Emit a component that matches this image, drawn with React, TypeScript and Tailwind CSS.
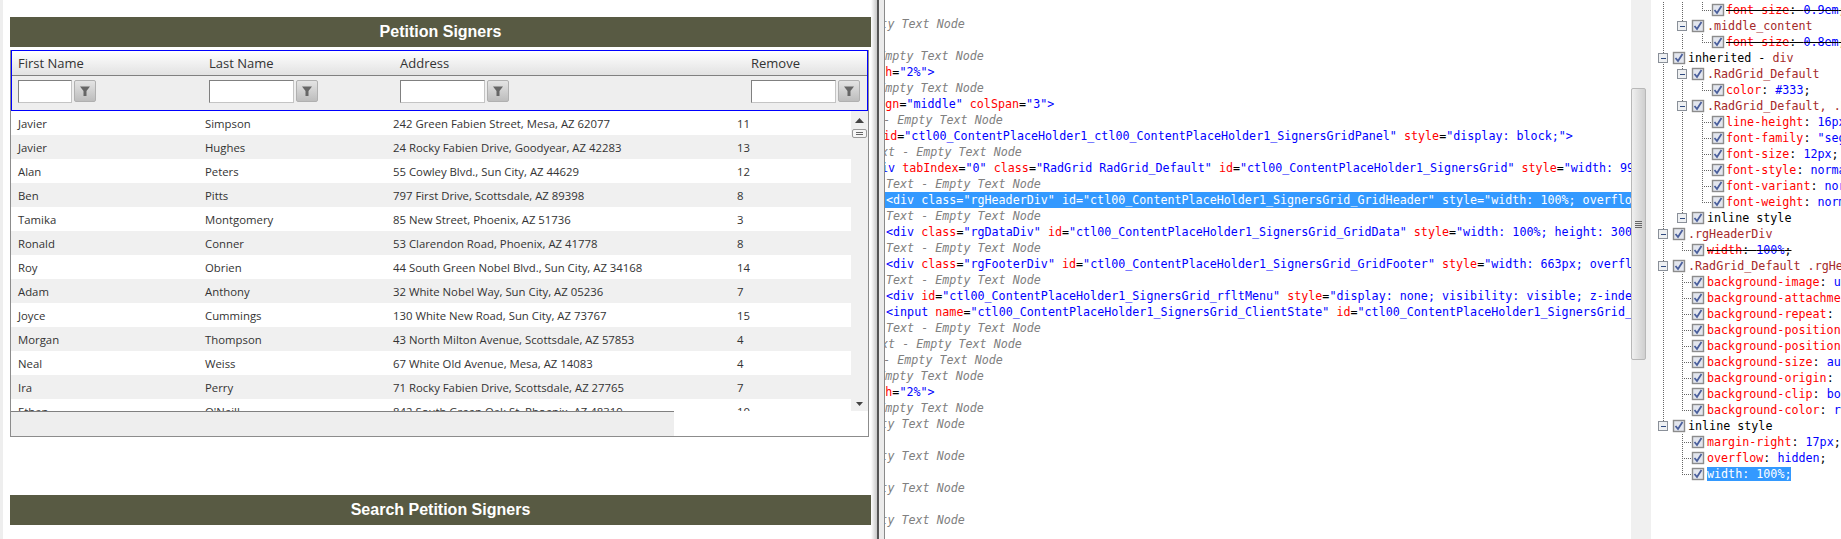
const signers = [
  ['Javier', 'Simpson', '242 Green Fabien Street, Mesa, AZ 62077', '11'],
  ['Javier', 'Hughes', '24 Rocky Fabien Drive, Goodyear, AZ 42283', '13'],
  ['Alan', 'Peters', '55 Cowley Blvd., Sun City, AZ 44629', '12'],
  ['Ben', 'Pitts', '797 First Drive, Scottsdale, AZ 89398', '8'],
  ['Tamika', 'Montgomery', '85 New Street, Phoenix, AZ 51736', '3'],
  ['Ronald', 'Conner', '53 Clarendon Road, Phoenix, AZ 41778', '8'],
  ['Roy', 'Obrien', '44 South Green Nobel Blvd., Sun City, AZ 34168', '14'],
  ['Adam', 'Anthony', '32 White Nobel Way, Sun City, AZ 05236', '7'],
  ['Joyce', 'Cummings', '130 White New Road, Sun City, AZ 73767', '15'],
  ['Morgan', 'Thompson', '43 North Milton Avenue, Scottsdale, AZ 57853', '4'],
  ['Neal', 'Weiss', '67 White Old Avenue, Mesa, AZ 14083', '4'],
  ['Ira', 'Perry', '71 Rocky Fabien Drive, Scottsdale, AZ 27765', '7'],
  ['Ethan', "O'Neill", '842 South Green Oak St, Phoenix, AZ 48319', '10'],
]

const INDENT = ['ml-[1px]', 'ml-[-18px]', 'ml-[-37px]', 'ml-[-56px]', 'ml-[-75px]']

const TEXT = 'Text - Empty Text Node'

// [indent level, text]; null is a blank line
const codeLines: ([number, string] | null)[] = [
  null,
  [4, TEXT],
  null,
  [3, TEXT],
  [3, '<td width="2%">'],
  [3, TEXT],
  [3, '<td vAlign="middle" colSpan="3">'],
  [2, TEXT],
  [2, '<div id="ctl00_ContentPlaceHolder1_ctl00_ContentPlaceHolder1_SignersGridPanel" style="display: block;">'],
  [1, TEXT],
  [1, '<div tabIndex="0" class="RadGrid RadGrid_Default" id="ctl00_ContentPlaceHolder1_SignersGrid" style="width: 99%; height: 300px;">'],
  [0, TEXT],
  [0, '<div class="rgHeaderDiv" id="ctl00_ContentPlaceHolder1_SignersGrid_GridHeader" style="width: 100%; overflow: hidden; margin-right: 17px;">'],
  [0, TEXT],
  [0, '<div class="rgDataDiv" id="ctl00_ContentPlaceHolder1_SignersGrid_GridData" style="width: 100%; height: 300px; overflow: auto;">'],
  [0, TEXT],
  [0, '<div class="rgFooterDiv" id="ctl00_ContentPlaceHolder1_SignersGrid_GridFooter" style="width: 663px; overflow: hidden;">'],
  [0, TEXT],
  [0, '<div id="ctl00_ContentPlaceHolder1_SignersGrid_rfltMenu" style="display: none; visibility: visible; z-index: 7000;">'],
  [0, '<input name="ctl00_ContentPlaceHolder1_SignersGrid_ClientState" id="ctl00_ContentPlaceHolder1_SignersGrid_ClientState" type="hidden">'],
  [0, TEXT],
  [1, TEXT],
  [2, TEXT],
  [3, TEXT],
  [3, '<td width="2%">'],
  [3, TEXT],
  [4, TEXT],
  null,
  [4, TEXT],
  null,
  [4, TEXT],
  null,
  [4, TEXT],
]

function Markup({ text }: { text: string }) {
  const tokens = text.split(/(\s+|=|"[^"]*"?)/).filter(Boolean)
  return (
    <>
      {tokens.map((t, i) => {
        let color = 'text-[#ff0000]'
        if (t === '=' || t.trim() === '') color = 'text-black'
        else if (t[0] === '"' || t[0] === '<' || t[0] === '>') color = 'text-[#0000ff]'
        return <span key={i} className={color}>{t}</span>
      })}
    </>
  )
}

function CodeLine({ line, selected }: { line: [number, string] | null; selected: boolean }) {
  if (!line) return <div className="h-4" />
  const [level, text] = line
  return (
    <div className={`h-4 leading-4 whitespace-pre ${selected ? 'bg-[#3399ff] text-white' : ''}`}>
      <div className={INDENT[level]}>
        {selected ? text : text[0] === '<' ? <Markup text={text} /> : <span className="italic text-[#808080]">{text}</span>}
      </div>
    </div>
  )
}

type Line = 'none' | 'half' | 'full'

function TreeGlyph({ level, spine, mid, leaf, minus }: { level: 0 | 1 | 2; spine: Line; mid: Line; leaf: Line; minus: boolean }) {
  const box = [1673, 1692, 1712][level]
  const width = [37, 56, 75][level]
  const minusAt = [1663, 1682, 1702][level]
  const vline = (x: number, l: Line) =>
    l !== 'none' && <line x1={x + 0.5} x2={x + 0.5} y1={0} y2={l === 'half' ? 8 : 16} stroke="#666" strokeDasharray="1 1" />
  return (
    <svg width={width} height={16} viewBox={`1651 0 ${width} 16`} className="shrink-0">
      {vline(1663, spine)}
      {vline(1682, mid)}
      {vline(1702, leaf)}
      {!minus && <line x1={minusAt} x2={box} y1={8.5} y2={8.5} stroke="#666" strokeDasharray="1 1" />}
      {minus && (
        <g>
          <rect x={minusAt - 4.5} y={3.5} width={9} height={9} fill="#eef0f2" stroke="#8a9099" />
          <line x1={minusAt - 2} x2={minusAt + 3} y1={8.5} y2={8.5} stroke="#2f4a80" />
        </g>
      )}
      <rect x={box + 0.5} y={2.5} width={11} height={11} fill="#e3e6ee" stroke="#8c8c8c" strokeWidth={1.4} />
      <path d={`M${box + 2.5} 8 L${box + 5} 11 L${box + 9.5} 4`} fill="none" stroke="#4a5f9c" strokeWidth={1.8} />
    </svg>
  )
}

function Prop({ name, value, strike, selected }: { name: string; value: string; strike?: boolean; selected?: boolean }) {
  if (selected) return <span className="bg-[#3399ff] text-white">{name}: {value};</span>
  return (
    <span className={strike ? 'line-through decoration-black' : ''}>
      <span className="text-[#ff0000]">{name}</span>
      <span className="text-black">: </span>
      <span className="text-[#0000ff]">{value}</span>
      <span className="text-black">;</span>
    </span>
  )
}

const Selector = ({ text }: { text: string }) => <span className="text-[#a52a2a]">{text}</span>
const Plain = ({ text }: { text: string }) => <span className="text-black">{text}</span>

type TreeRow = { level: 0 | 1 | 2; spine?: Line; mid?: Line; leaf?: Line; minus?: boolean; label: React.ReactNode }

const rule = (text: string, mid: Line = 'full'): TreeRow => ({ level: 1, spine: 'full', mid, minus: true, label: <Selector text={text} /> })
const cprop = (name: string, value: string, leaf: Line = 'full', strike = false): TreeRow => ({
  level: 2, spine: 'full', mid: 'full', leaf, label: <Prop name={name} value={value} strike={strike} />,
})
const bprop = (name: string, value: string, mid: Line = 'full', spine: Line = 'full', strike = false, selected = false): TreeRow => ({
  level: 1, spine, mid, label: <Prop name={name} value={value} strike={strike} selected={selected} />,
})
const top = (label: React.ReactNode, spine: Line = 'full'): TreeRow => ({ level: 0, spine, minus: true, label })

const treeRows: TreeRow[] = [
  cprop('font-size', '0.9em', 'half', true),
  { ...rule('.middle_content'), mid: 'half' },
  cprop('font-size', '0.8em', 'half', true),
  top(<><Plain text="inherited - " /><Selector text="div" /></>),
  rule('.RadGrid_Default'),
  cprop('color', '#333', 'half'),
  rule('.RadGrid_Default, .RadGrid_Default .rgMasterTable'),
  cprop('line-height', '16px'),
  cprop('font-family', '"segoe ui", arial, sans-serif'),
  cprop('font-size', '12px'),
  cprop('font-style', 'normal'),
  cprop('font-variant', 'normal'),
  cprop('font-weight', 'normal', 'half'),
  { ...rule(''), mid: 'half', label: <Plain text="inline style" /> },
  top(<Selector text=".rgHeaderDiv" />),
  bprop('width', '100%', 'half', 'full', true),
  top(<Selector text=".RadGrid_Default .rgHeaderDiv" />),
  bprop('background-image', 'url(WebResource.axd)'),
  bprop('background-attachment', 'scroll'),
  bprop('background-repeat', 'repeat-x'),
  bprop('background-position-x', '0%'),
  bprop('background-position-y', '0%'),
  bprop('background-size', 'auto'),
  bprop('background-origin', 'padding-box'),
  bprop('background-clip', 'border-box'),
  bprop('background-color', 'rgb(234, 234, 234)', 'half'),
  top(<Plain text="inline style" />, 'half'),
  bprop('margin-right', '17px', 'full', 'none'),
  bprop('overflow', 'hidden', 'full', 'none'),
  bprop('width', '100%', 'half', 'none', false, true),
]

function Funnel() {
  return (
    <svg width="12" height="12" viewBox="0 0 12 12">
      <path d="M1 1.5h10L7.5 6v5h-3V6z" fill="#666" />
    </svg>
  )
}

function FilterCell({ inputClass }: { inputClass: string }) {
  return (
    <div className="flex gap-[2px]">
      <div className={`h-[23px] bg-white border border-t-[#808080] border-l-[#808080] border-r-[#c4c4c4] border-b-[#c4c4c4] ${inputClass}`} />
      <div className="flex h-[22px] w-[22px] items-center justify-center rounded-[2px] border border-[#b0b0b0] bg-gradient-to-b from-[#e4e4e4] to-[#bdbdbd]">
        <Funnel />
      </div>
    </div>
  )
}

function SectionBar({ title }: { title: string }) {
  return (
    <div className="h-[30px] bg-[#585a43] text-center font-['Liberation_Sans',sans-serif] text-base leading-[30px] font-bold text-white">
      {title}
    </div>
  )
}

export default function App() {
  return (
    <div className="flex h-[539px] w-[1841px] overflow-hidden bg-white">
      <div className="w-[3px] shrink-0 bg-[#eeeeee]" />

      {/* page under the inspector */}
      <div className="w-[868px] shrink-0 pt-[17px] pl-[7px]">
        <SectionBar title="Petition Signers" />
        <div className="mt-[3px] mr-[2px] h-[387px] border-r border-b border-l border-[#8c8c8c] font-['Open_Sans',sans-serif] text-[#333]">
          <div className="border border-[#0000ff]">
            <div className="grid h-[25px] grid-cols-[191px_191px_351px_1fr] border-b border-[#808080] bg-gradient-to-b from-white to-[#e2e2e2] pl-[6px] text-[13px] leading-[24px]">
              <div>First Name</div>
              <div>Last Name</div>
              <div>Address</div>
              <div>Remove</div>
            </div>
            <div className="grid h-[34px] grid-cols-[191px_191px_351px_1fr] bg-[#eeeeee] pt-[4px] pl-[6px]">
              <FilterCell inputClass="w-[54px]" />
              <FilterCell inputClass="w-[85px]" />
              <FilterCell inputClass="w-[85px]" />
              <FilterCell inputClass="w-[85px]" />
            </div>
          </div>
          <div className="flex h-[300px] overflow-hidden">
            <div className="w-[841px] text-[11.35px]">
              {signers.map((s, i) => (
                <div key={i} className={`grid h-[24px] grid-cols-[187px_188px_344px_1fr] pt-px pl-[7px] leading-[24px] ${i % 2 ? 'bg-[#f0f0f0]' : 'bg-white'}`}>
                  {s.map((c, j) => <div key={j}>{c}</div>)}
                </div>
              ))}
            </div>
            <div className="flex w-[17px] flex-col items-center bg-[#f0f0f0] pt-[7px]">
              <svg width="9" height="5" viewBox="0 0 9 5"><path d="M4.5 0L9 5H0z" fill="#444" /></svg>
              <div className="mt-[6px] flex h-[9px] w-[15px] flex-col justify-center gap-[1px] rounded-[2px] border border-[#999] bg-[#f6f6f6] px-[3px]">
                <div className="h-px bg-[#666]" />
                <div className="h-px bg-[#666]" />
              </div>
              <svg className="mt-auto mb-[5px]" width="7" height="4" viewBox="0 0 7 4"><path d="M0 0h7L3.5 4z" fill="#444" /></svg>
            </div>
          </div>
          <div className="h-[25px] w-[663px] border-t border-[#808080] bg-[#eeeeee]" />
        </div>
        <div className="mt-[58px]">
          <SectionBar title="Search Petition Signers" />
        </div>
      </div>

      {/* splitter */}
      <div className="w-[6px] shrink-0 bg-gradient-to-r from-white to-[#c8c8c8]" />
      <div className="w-[2px] shrink-0 bg-[#555555]" />
      <div className="w-[5px] shrink-0 bg-[#ebebeb]" />
      <div className="w-px shrink-0 bg-[#8a8a8a]" />

      {/* inspector: html tree */}
      <div className="w-[746px] shrink-0 overflow-hidden font-['DejaVu_Sans_Mono',monospace] text-[11.7px]">
        {codeLines.map((line, i) => (
          <CodeLine key={i} line={line} selected={i === 12} />
        ))}
      </div>

      {/* inspector scrollbar */}
      <div className="flex w-[15px] shrink-0 flex-col bg-[#f0f0f0] pt-[88px]">
        <div className="flex h-[272px] items-center justify-center rounded-[2px] border border-[#b8b8b8] bg-gradient-to-r from-[#f0f0f0] to-[#cfcfcf]">
          <div className="flex w-[7px] flex-col gap-[1px]">
            <div className="h-px bg-[#666]" />
            <div className="h-px bg-[#666]" />
            <div className="h-px bg-[#666]" />
            <div className="h-px bg-[#666]" />
          </div>
        </div>
      </div>
      <div className="w-[5px] shrink-0 bg-[#f0f0f0]" />

      {/* inspector: style tree */}
      <div className="min-w-0 flex-1 overflow-hidden pt-[2px] font-['DejaVu_Sans_Mono',monospace] text-[11.7px]">
        {treeRows.map((r, i) => (
          <div key={i} className="flex h-4 items-center leading-4 whitespace-pre">
            <TreeGlyph level={r.level} spine={r.spine ?? 'none'} mid={r.mid ?? 'none'} leaf={r.leaf ?? 'none'} minus={!!r.minus} />
            <span>{r.label}</span>
          </div>
        ))}
      </div>
    </div>
  )
}
